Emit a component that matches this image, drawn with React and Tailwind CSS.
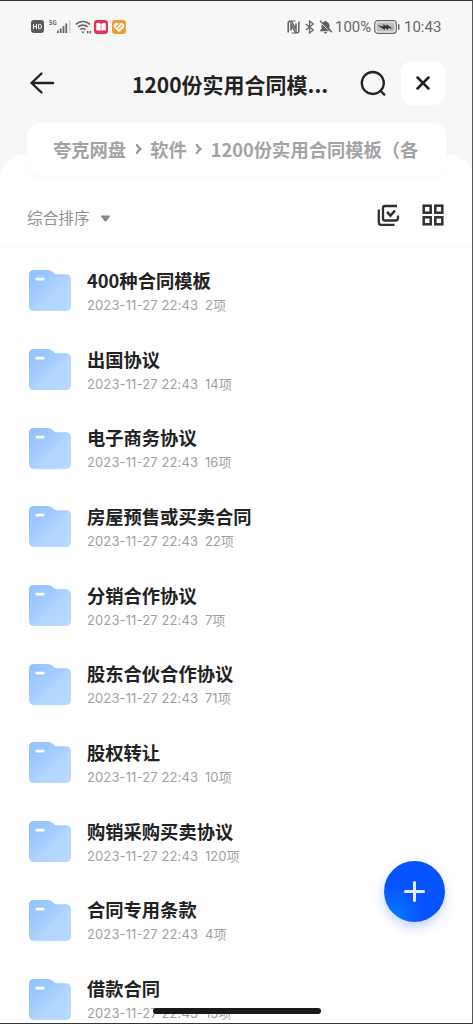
import React from 'react';

const folders = [
  { name: '400种合同模板', count: '2项' },
  { name: '出国协议', count: '14项' },
  { name: '电子商务协议', count: '16项' },
  { name: '房屋预售或买卖合同', count: '22项' },
  { name: '分销合作协议', count: '7项' },
  { name: '股东合伙合作协议', count: '71项' },
  { name: '股权转让', count: '10项' },
  { name: '购销采购买卖协议', count: '120项' },
  { name: '合同专用条款', count: '4项' },
  { name: '借款合同', count: '13项' },
];

const StatusBar = () => (
  <div className="flex h-[53px] shrink-0 items-center justify-between pl-[31px] pr-[31px] text-[#666]">
    <div className="flex items-center">
      <svg width="13" height="13" viewBox="0 0 13 13">
        <rect width="13" height="13" rx="3" fill="#5c5c5c" />
        <path d="M2.5 4v5M5.5 4v5M2.5 6.5h3M7.6 4.4v4.2h.9a2.1 2.1 0 0 0 0-4.2z" fill="none" stroke="#f7f7f7" strokeWidth="1" />
      </svg>
      <span className="ml-[5px] h-[16px] w-[8px] whitespace-nowrap text-[6px] leading-[7px] font-bold">5G</span>
      <svg width="14" height="14" viewBox="0 0 14 14" fill="#666">
        <rect x="0" y="10.5" width="1.8" height="2.5" />
        <rect x="2.8" y="8.5" width="1.8" height="4.5" />
        <rect x="5.6" y="6" width="1.8" height="7" />
        <rect x="8.4" y="3.5" width="1.8" height="9.5" />
        <rect x="12" y="0.5" width="1.6" height="12.5" fill="#d2d2d2" />
      </svg>
      <svg className="ml-[4px]" width="17" height="14" viewBox="0 0 17 14" fill="none" stroke="#666" strokeWidth="1.6">
        <path d="M.8 4.3a10.5 10.5 0 0 1 14.2 0M3.1 7a7 7 0 0 1 9.6 0M5.3 9.6a4 4 0 0 1 5.2 0" />
        <path d="M6.3 11.4L8 13.5l1.7-2.1z" fill="#666" stroke="none" />
        <path d="M12.7 11v2.5M15.3 11v2.5" strokeWidth="1.5" />
      </svg>
      <svg className="ml-[2px]" width="14" height="14" viewBox="0 0 14 14">
        <rect width="14" height="14" rx="3.2" fill="#e33455" />
        <path d="M2.2 3.2Q5 2.6 6.7 3.7v7Q5 9.8 2.2 10.5zM11.8 3.2Q9 2.6 7.3 3.7v7Q9 9.8 11.8 10.5z" fill="#fff" />
      </svg>
      <svg className="ml-[4px]" width="14" height="14" viewBox="0 0 14 14">
        <rect width="14" height="14" rx="3.2" fill="#f49a35" />
        <path d="M7 12L2.2 7.5C.3 4.7 3.8 1.2 7 3.9c3.2-2.7 6.7.8 4.8 3.6z" fill="#fff" />
        <path d="M4 7.5L7.5 4.2M6.2 9.2L10.2 5.5" stroke="#f49a35" strokeWidth="1.1" />
      </svg>
    </div>
    <div className="flex items-center">
      <svg className="-ml-px" width="13" height="14" viewBox="0 0 13 14" fill="none" stroke="#666">
        <path d="M1.2 12.5V3.2Q1.2 1.2 3.2 1.2H4.3L9 9.5V3.5M11.8 1.5V10.8Q11.8 12.8 9.8 12.8H8.7L4 4.5V10.5" strokeWidth="1.6" />
        <path d="M4 1H8.5M4.5 13H9" strokeWidth="1" />
      </svg>
      <svg className="ml-[5px]" width="9" height="14" viewBox="0 0 9 14" fill="none" stroke="#666" strokeWidth="1.3">
        <path d="M.7 4l7.5 6L4.5 13V1l3.700 3L.7 10" />
      </svg>
      <svg className="ml-[5px]" width="13" height="14" viewBox="0 0 13 14">
        <path d="M5.5 1.7a1 1 0 0 1 2 0C9.5 2.2 10.5 4 10.5 6v2.7L12 10.5v.7H1v-.7l1.500-1.800V6C2.5 4 3.5 2.2 5.5 1.7zM5 12h3q-.3 1.5-1.5 1.5T5 12z" fill="#606060" />
        <path d="M0 1.2L12.5 13" stroke="#f7f7f7" strokeWidth="1" />
        <path d="M1 .8L13 12.2" stroke="#606060" strokeWidth="1.2" />
      </svg>
      <span className="ml-[3px] w-[37px] whitespace-nowrap pt-px font-[Roboto] text-[15px] leading-none">100%</span>
      <svg className="ml-[2px]" width="26" height="14" viewBox="0 0 26 14">
        <rect x=".7" y=".7" width="21.6" height="12.6" rx="3" fill="none" stroke="#666" strokeWidth="1.2" />
        <rect x="2.5" y="2.5" width="18" height="9" rx="1.5" fill="#bcbcbc" />
        <path d="M3.5 5.3l6 1.2-.5-2.3 3.5 2.1-.2-2L19 8.8l-5-.9.3 2-3.5-1.9.2 2z" fill="#333" />
        <rect x="24" y="4" width="1.5" height="6" rx=".7" fill="#666" />
      </svg>
      <span className="ml-[4px] w-[38px] whitespace-nowrap pt-px font-[Roboto] text-[15px] leading-none">10:43</span>
    </div>
  </div>
);

const FolderIcon = () => (
  <svg className="shrink-0" width="44" height="42" viewBox="0 0 44 42">
    <defs>
      <linearGradient id="folder" x1="0" y1="0" x2="1" y2="1">
        <stop offset="0" stopColor="#8fc0fe" />
        <stop offset=".5" stopColor="#a9cffe" />
        <stop offset=".55" stopColor="#b2d5ff" />
        <stop offset="1" stopColor="#b9daff" />
      </linearGradient>
    </defs>
    <path d="M6 0H20Q22.5 0 24.3 1.5L26.5 3.4Q27.6 4.3 29.5 4.3H37.5Q43 4.3 43 9.8V35.5Q43 41 37.5 41H6.5Q1 41 1 35.5V5Q1 0 6 0z" fill="url(#folder)" />
    <rect x="7.5" y="7.7" width="9" height="2.8" rx="1" fill="#fff" />
  </svg>
);

const Chevron = () => (
  <svg className="mx-[8.5px] -mt-[2px] shrink-0" width="7" height="12" viewBox="0 0 7 12" fill="none" stroke="#999" strokeWidth="2.2">
    <path d="M1.5 1.2Q2.5 4 5.5 6Q2.5 8 1.5 10.8" />
  </svg>
);

const App = () => {
  return (
    <div className="relative flex h-[1024px] w-[473px] flex-col overflow-hidden bg-[#f7f7f7] font-['Noto_Sans_CJK_SC',sans-serif]">
      <StatusBar />

      {/* Title bar */}
      <header className="flex h-[60px] shrink-0 items-center pl-[29px] pr-[28px]">
        <svg className="shrink-0" width="26" height="24" viewBox="0 0 26 24" fill="none" stroke="#222" strokeWidth="2.4" strokeLinecap="round" strokeLinejoin="round">
          <path d="M12.5 2.5L2.5 12l10 9.5M2.5 12H24" />
        </svg>
        <h1 className="ml-[77px] w-[228px] whitespace-nowrap pt-px text-[21px] leading-[30px] font-bold text-[#222]">1200份实用合同模...</h1>
        <svg className="shrink-0" width="27" height="27" viewBox="0 0 27 27" fill="none" stroke="#222" strokeWidth="2.3" strokeLinecap="round">
          <circle cx="12.8" cy="13" r="11" />
          <path d="M20.5 20.8L24.3 24.6" />
        </svg>
        <button className="ml-[14px] flex h-[44px] w-[44px] shrink-0 items-center justify-center rounded-[11px] bg-white">
          <svg width="14" height="14" viewBox="0 0 14 14" stroke="#222" strokeWidth="2.5" strokeLinecap="round">
            <path d="M1.5 1.5l11 11M12.5 1.5l-11 11" />
          </svg>
        </button>
      </header>

      {/* Breadcrumb */}
      <nav className="relative z-10 mx-[27px] mt-[10px] flex h-[52px] shrink-0 items-center overflow-hidden whitespace-nowrap rounded-[12px] bg-white pl-[26px] pt-[2px] text-[18.3px] font-bold text-[#a3a3a3] shadow-[0_3px_8px_rgba(0,0,0,0.025)]">
        <span>夸克网盘</span>
        <Chevron />
        <span>软件</span>
        <Chevron />
        <span>1200份实用合同模板（各</span>
      </nav>

      <main className="-mt-[21px] flex flex-1 flex-col rounded-t-[26px] bg-white">
        {/* Sort row */}
        <div className="mt-[21px] flex h-[73px] shrink-0 items-center border-b border-[#fafafa] pl-[27px] pr-[29px] pt-[8px]">
          <span className="pt-[5px] text-[15.7px] leading-[22px] text-[#929292]">综合排序</span>
          <svg className="mt-[6px] ml-[10px]" width="11" height="7" viewBox="0 0 11 7">
            <path d="M1.5 .5h8q1 0 .4 1L6.5 6q-1 1-2 0L1.1 1.5Q.5 .5 1.5 .5z" fill="#858585" />
          </svg>
          <svg className="ml-auto" width="23" height="23" viewBox="0 0 23 23" fill="none" stroke="#303030" strokeWidth="2.3">
            <path d="M20 2H8Q6 2 6 4V14.5Q6 16.5 8 16.5H18.5Q21 16.5 21 14V11.5M1.8 5.5V18.5Q1.8 20.8 4 20.8H17.5" />
            <path d="M10 8L13.5 11.5L18 6.5" strokeWidth="2.6" />
          </svg>
          <svg className="ml-[22px]" width="22" height="22" viewBox="0 0 22 22" fill="none" stroke="#303030" strokeWidth="2.5">
            <rect x="1.7" y="1.7" width="7" height="7" />
            <rect x="13.3" y="1.7" width="7" height="7" />
            <rect x="1.7" y="13.3" width="7" height="7" />
            <rect x="13.3" y="13.3" width="7" height="7" />
          </svg>
        </div>

        {/* Folder list */}
        <ul className="mt-[4px]">
          {folders.map((folder) => (
            <li key={folder.name} className="flex h-[78.7px] items-center pl-[28px]">
              <FolderIcon />
              <div className="ml-[15px] whitespace-nowrap">
                <p className="text-[18.3px] leading-[26px] font-bold text-[#222]">{folder.name}</p>
                <p className="flex gap-[7px] pt-px font-[Inter,'Noto_Sans_CJK_SC',sans-serif] text-[13px] leading-[22px] text-[#9f9f9f]">
                  <span className="w-[111px] tracking-[0.12px]">2023-11-27 22:43</span>
                  <span>{folder.count}</span>
                </p>
              </div>
            </li>
          ))}
        </ul>
      </main>

      {/* Add button */}
      <button className="absolute left-[384px] top-[861px] flex h-[61px] w-[61px] items-center justify-center rounded-full bg-[radial-gradient(circle_at_15%_90%,#0879ff_0%,#0754ff_40%)] shadow-[0_5px_12px_rgba(7,84,255,0.25)]">
        <svg width="21" height="21" viewBox="0 0 21 21" stroke="#e4edff" strokeWidth="3" strokeLinecap="round">
          <path d="M10.5 1.5v18M1.5 10.5h18" />
        </svg>
      </button>

      {/* Home indicator */}
      <div className="absolute left-[153px] top-[1008px] h-[6px] w-[168px] rounded-full bg-[#171a17]" />

      {/* Screen edge */}
      <div className="pointer-events-none absolute inset-0 z-20 border-t border-r border-b border-t-[#333] border-r-[#555] border-b-[#333]" />
    </div>
  );
};

export default App;
